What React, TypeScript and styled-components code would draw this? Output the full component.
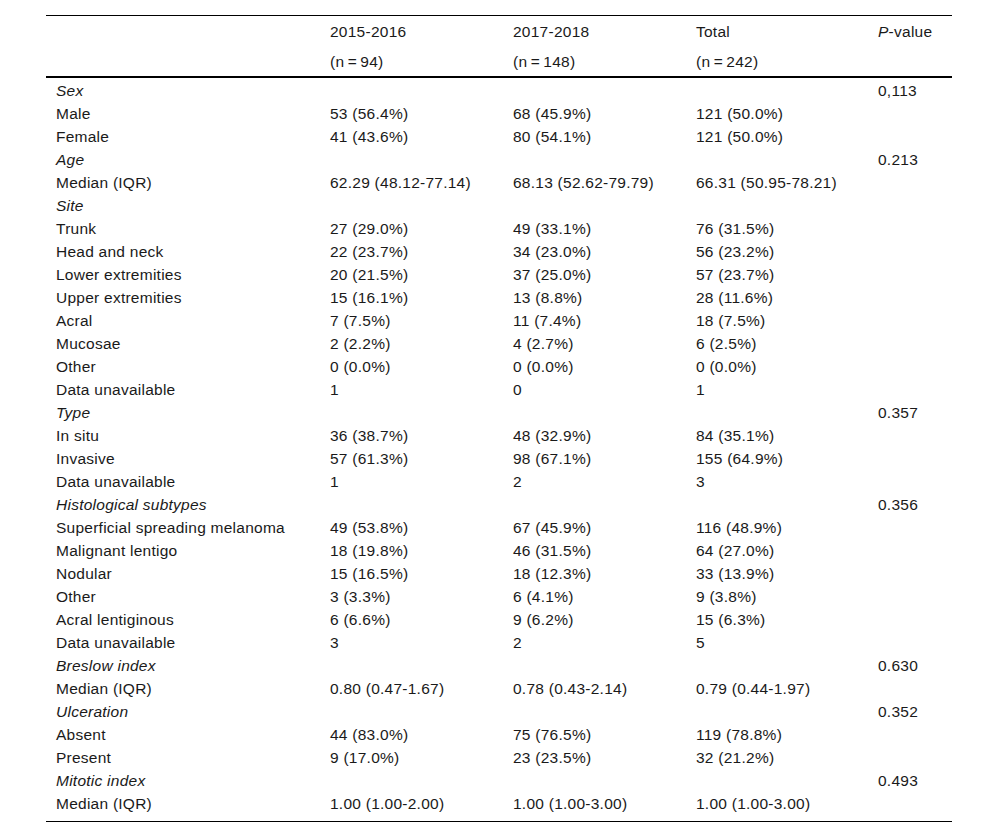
import { createGlobalStyle } from 'styled-components'
import styled from 'styled-components'

type Row = {
  label: string
  group?: boolean
  values?: [string, string, string]
  p?: string
}

const rows: Row[] = [
  { label: 'Sex', group: true, p: '0,113' },
  { label: 'Male', values: ['53 (56.4%)', '68 (45.9%)', '121 (50.0%)'] },
  { label: 'Female', values: ['41 (43.6%)', '80 (54.1%)', '121 (50.0%)'] },
  { label: 'Age', group: true, p: '0.213' },
  { label: 'Median (IQR)', values: ['62.29 (48.12-77.14)', '68.13 (52.62-79.79)', '66.31 (50.95-78.21)'] },
  { label: 'Site', group: true },
  { label: 'Trunk', values: ['27 (29.0%)', '49 (33.1%)', '76 (31.5%)'] },
  { label: 'Head and neck', values: ['22 (23.7%)', '34 (23.0%)', '56 (23.2%)'] },
  { label: 'Lower extremities', values: ['20 (21.5%)', '37 (25.0%)', '57 (23.7%)'] },
  { label: 'Upper extremities', values: ['15 (16.1%)', '13 (8.8%)', '28 (11.6%)'] },
  { label: 'Acral', values: ['7 (7.5%)', '11 (7.4%)', '18 (7.5%)'] },
  { label: 'Mucosae', values: ['2 (2.2%)', '4 (2.7%)', '6 (2.5%)'] },
  { label: 'Other', values: ['0 (0.0%)', '0 (0.0%)', '0 (0.0%)'] },
  { label: 'Data unavailable', values: ['1', '0', '1'] },
  { label: 'Type', group: true, p: '0.357' },
  { label: 'In situ', values: ['36 (38.7%)', '48 (32.9%)', '84 (35.1%)'] },
  { label: 'Invasive', values: ['57 (61.3%)', '98 (67.1%)', '155 (64.9%)'] },
  { label: 'Data unavailable', values: ['1', '2', '3'] },
  { label: 'Histological subtypes', group: true, p: '0.356' },
  { label: 'Superficial spreading melanoma', values: ['49 (53.8%)', '67 (45.9%)', '116 (48.9%)'] },
  { label: 'Malignant lentigo', values: ['18 (19.8%)', '46 (31.5%)', '64 (27.0%)'] },
  { label: 'Nodular', values: ['15 (16.5%)', '18 (12.3%)', '33 (13.9%)'] },
  { label: 'Other', values: ['3 (3.3%)', '6 (4.1%)', '9 (3.8%)'] },
  { label: 'Acral lentiginous', values: ['6 (6.6%)', '9 (6.2%)', '15 (6.3%)'] },
  { label: 'Data unavailable', values: ['3', '2', '5'] },
  { label: 'Breslow index', group: true, p: '0.630' },
  { label: 'Median (IQR)', values: ['0.80 (0.47-1.67)', '0.78 (0.43-2.14)', '0.79 (0.44-1.97)'] },
  { label: 'Ulceration', group: true, p: '0.352' },
  { label: 'Absent', values: ['44 (83.0%)', '75 (76.5%)', '119 (78.8%)'] },
  { label: 'Present', values: ['9 (17.0%)', '23 (23.5%)', '32 (21.2%)'] },
  { label: 'Mitotic index', group: true, p: '0.493' },
  { label: 'Median (IQR)', values: ['1.00 (1.00-2.00)', '1.00 (1.00-3.00)', '1.00 (1.00-3.00)'] },
]

export default function App() {
  return (
    <>
      <GlobalStyle />
      <Page>
        <Table>
          <colgroup>
            <col style={{ width: 274 }} />
            <col style={{ width: 183 }} />
            <col style={{ width: 183 }} />
            <col style={{ width: 182 }} />
            <col style={{ width: 84 }} />
          </colgroup>
          <thead>
            <tr>
              <HeadCell />
              <HeadCell>2015-2016</HeadCell>
              <HeadCell>2017-2018</HeadCell>
              <HeadCell>Total</HeadCell>
              <HeadCell>
                <i>P</i>-value
              </HeadCell>
            </tr>
            <tr>
              <HeadCell $last />
              <HeadCell $last>(n&#8201;=&#8201;94)</HeadCell>
              <HeadCell $last>(n&#8201;=&#8201;148)</HeadCell>
              <HeadCell $last>(n&#8201;=&#8201;242)</HeadCell>
              <HeadCell $last />
            </tr>
          </thead>
          <tbody>
            {rows.map((row, index) => {
              const last = index === rows.length - 1
              return (
                <tr key={index}>
                  <Cell $italic={row.group} $last={last}>
                    {row.label}
                  </Cell>
                  {[0, 1, 2].map((i) => (
                    <Cell key={i} $last={last}>
                      {row.values ? row.values[i] : ''}
                    </Cell>
                  ))}
                  <Cell $last={last}>{row.p ?? ''}</Cell>
                </tr>
              )
            })}
          </tbody>
        </Table>
      </Page>
    </>
  )
}

// Styled components
const GlobalStyle = createGlobalStyle`
  body {
    margin: 0;
    background: #ffffff;
    font-family: "Liberation Sans", Arial, sans-serif;
    color: #1a1a1a;
  }
`

const Page = styled.div`
  width: 1000px;
  padding: 15px 48px 0 46px;
  box-sizing: border-box;
`

const Table = styled.table`
  width: 906px;
  border-collapse: collapse;
  table-layout: fixed;
  border-top: 1px solid #000;
  border-bottom: 1px solid #000;
  font-size: 15.5px;
  letter-spacing: 0.25px;
`

const HeadCell = styled.th<{ $last?: boolean }>`
  text-align: left;
  font-weight: normal;
  height: 29px;
  padding: 1px 0 0 10px;
  vertical-align: middle;
  border-bottom: ${(p) => (p.$last ? '2px solid #000' : 'none')};
  white-space: nowrap;
`

const Cell = styled.td<{ $italic?: boolean; $last?: boolean }>`
  height: 20px;
  padding: 3px 0 ${(p) => (p.$last ? '7px' : '0')} 10px;
  box-sizing: content-box;
  vertical-align: middle;
  font-style: ${(p) => (p.$italic ? 'italic' : 'normal')};
  white-space: nowrap;
`
